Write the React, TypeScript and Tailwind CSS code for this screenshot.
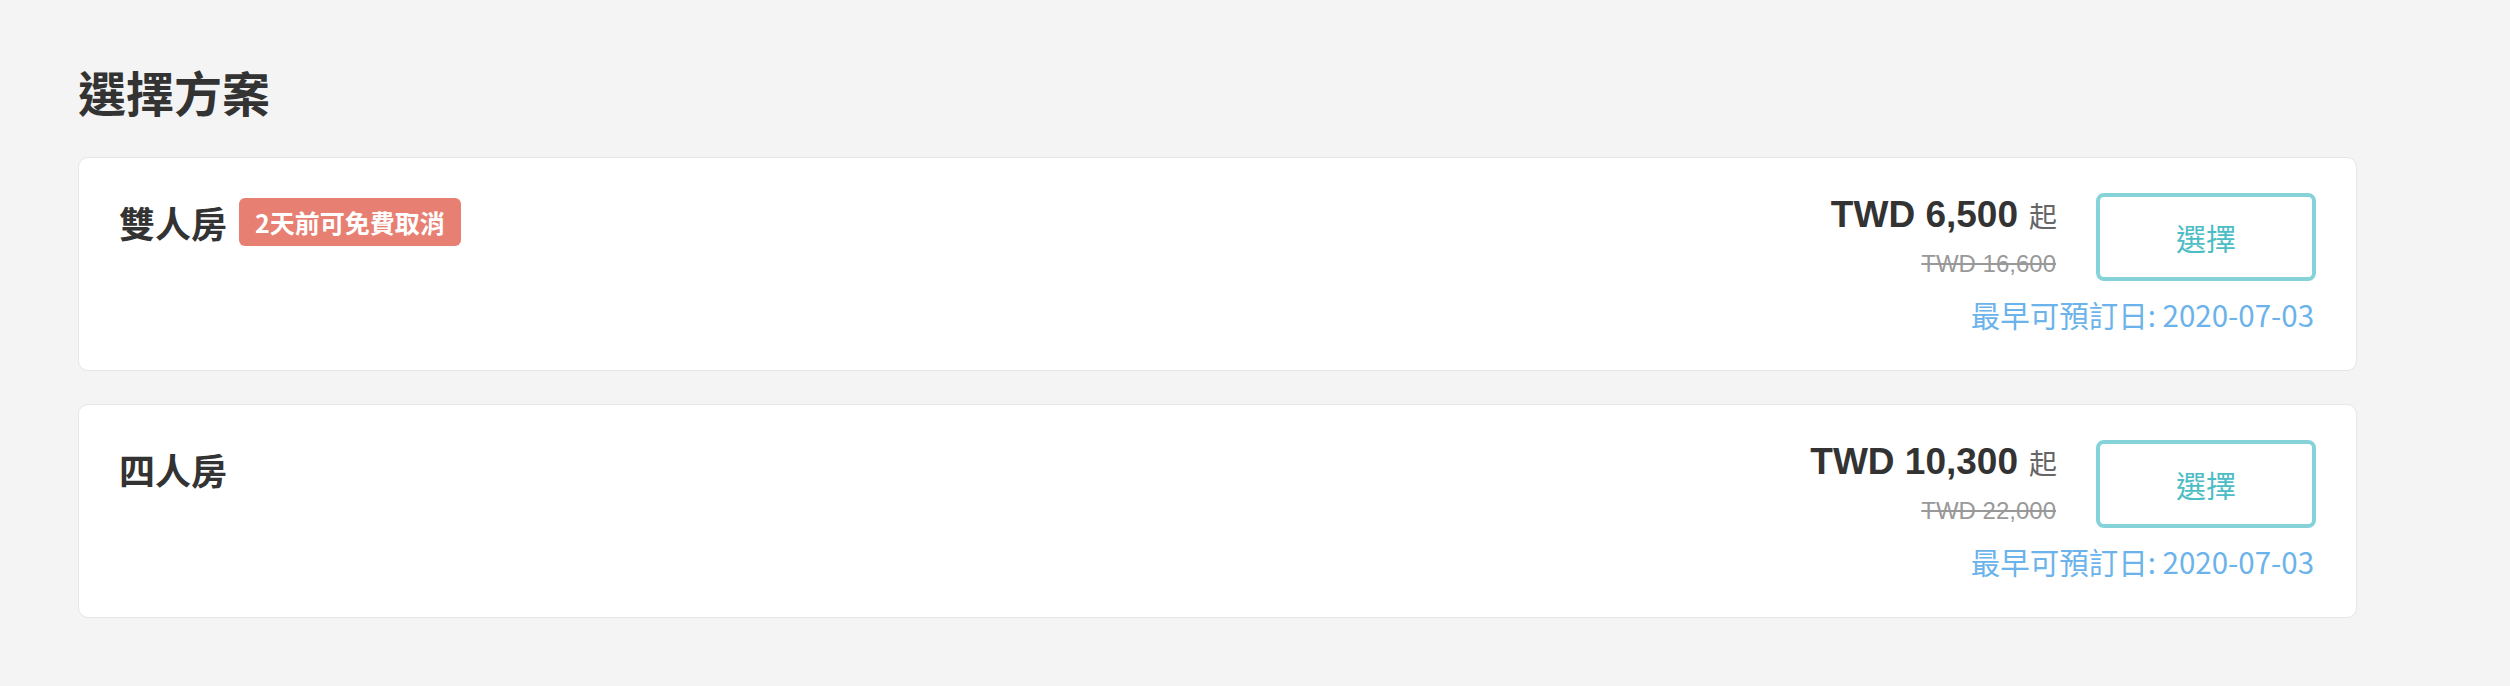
import React from 'react';

const PLANS = [
  { name: '雙人房', badge: '2天前可免費取消', price: 'TWD 6,500', original: 'TWD 16,600', date: '2020-07-03' },
  { name: '四人房', badge: '', price: 'TWD 10,300', original: 'TWD 22,000', date: '2020-07-03' },
];

const cjk = { fontFamily: '"Noto Sans CJK TC", "Noto Sans", sans-serif' };
const latin = { fontFamily: '"Liberation Sans", Arial, "Noto Sans CJK TC", sans-serif' };

export default function App() {
  return (
    <div className="min-h-[686px] w-full bg-[#f4f4f4] pt-[67px]" style={cjk}>
      <div className="ml-[78px] w-[2279px]">
        <h2 className="text-[48px] leading-none font-bold text-[#333333] mb-[42px]">選擇方案</h2>

        <div className="flex flex-col gap-[33px]">
          {PLANS.map((plan, idx) => (
            <div
              key={idx}
              className="h-[214px] bg-white border border-[#e6e6e6] rounded-[10px] flex justify-between pl-[40px] pr-[40px] pt-[35px]"
            >
              {/* left: room name + badge */}
              <div className="flex items-center h-[48px] mt-[5px]">
                <span className="text-[36px] leading-none font-bold text-[#333333]">{plan.name}</span>
                {plan.badge && (
                  <span className="ml-[12px] h-[48px] flex items-center px-[16px] rounded-[6px] bg-[#e77f73] text-white text-[25px] leading-none font-bold">
                    {plan.badge}
                  </span>
                )}
              </div>

              {/* right: price + button + date */}
              <div className="flex flex-col items-end">
                <div className="flex items-start">
                  <div className="flex flex-col items-end pt-[1px]">
                    <div className="flex items-baseline h-[40px]">
                      <span className="text-[37px] leading-[40px] font-bold text-[#333333]" style={latin}>
                        {plan.price}
                      </span>
                      <span className="ml-[11px] text-[28px] text-[#666666]">起</span>
                    </div>
                    <span className="mt-[16px] mr-[1px] text-[24px] leading-[27px] text-[#999999] line-through" style={latin}>
                      {plan.original}
                    </span>
                  </div>
                  <button className="ml-[39px] w-[220px] h-[88px] border-[4px] border-[#86d2d9] rounded-[8px] bg-white text-[#4dbdc5] text-[30px] font-normal flex items-center justify-center">
                    選擇
                  </button>
                </div>
                <div className="mt-[12px] text-[29.5px] leading-[42px] text-[#6bb3ea] pr-[2px]">
                  最早可預訂日: {plan.date}
                </div>
              </div>
            </div>
          ))}
        </div>
      </div>
    </div>
  );
}
